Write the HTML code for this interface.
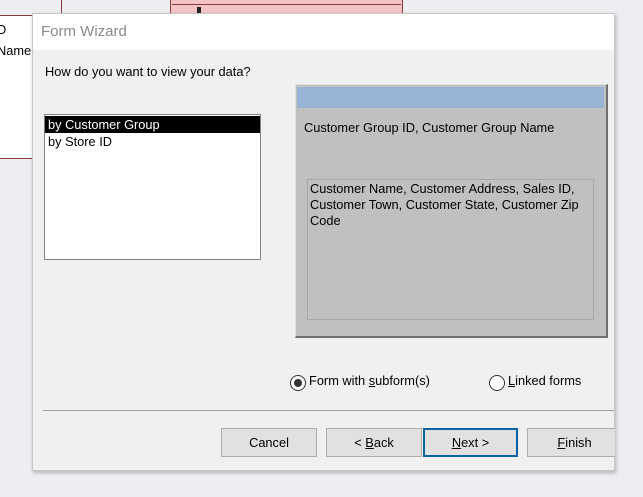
<!DOCTYPE html>
<html><head><style>
*{margin:0;padding:0;box-sizing:border-box}
body{width:643px;height:497px;background:#eceef1;position:relative;overflow:hidden;font-family:"Liberation Sans",sans-serif;font-size:12.8px;color:#000}
.a{position:absolute}
.btn{position:absolute;top:428px;height:29px;background:#e1e1e1;border:1px solid #adadad;text-align:center;line-height:27px;font-size:12.8px}
u{text-decoration:underline}
</style></head><body>
<div class="a" style="left:0;top:15px;width:40px;height:144px;border-top:1px solid #8b3a3a;border-bottom:1px solid #8b3a3a;background:#fff"></div>
<div class="a" style="left:61px;top:0;width:1px;height:14px;background:#8b3a3a"></div>
<div class="a" style="left:-3px;top:22px">D</div>
<div class="a" style="left:-3px;top:43px">Name</div>
<div class="a" style="left:170px;top:0;width:233px;height:14px;border-left:1px solid #8b3a3a;border-right:1px solid #8b3a3a;background:#f4c4c4"></div>
<div class="a" style="left:172px;top:4px;width:229px;height:1px;background:#8b3a3a"></div>
<div class="a" style="left:197px;top:7px;width:4px;height:6px;background:#222"></div>
<div class="a" style="left:32px;top:13px;width:583px;height:458px;background:#f0f0f0;border:1px solid #c8c8c8;box-shadow:1px 2px 4px rgba(0,0,0,.25)"></div>
<div class="a" style="left:33px;top:14px;width:581px;height:36px;background:#fff"></div>
<div class="a" style="left:41px;top:23px;font-size:15px;color:#8a8a8a">Form Wizard</div>
<div class="a" style="left:45px;top:64px">How do you want to view your data?</div>
<div class="a" style="left:44px;top:114px;width:217px;height:146px;background:#fff;border:1px solid #828282"></div>
<div class="a" style="left:45px;top:116px;width:215px;height:17px;background:#000;color:#fff;padding-left:3px;line-height:17px">by Customer Group</div>
<div class="a" style="left:48px;top:134px">by Store ID</div>
<div class="a" style="left:295px;top:84px;width:313px;height:254px;background:#c0c0c0;border-top:1px solid #e0e0e0;border-left:1px solid #e0e0e0;border-right:2px solid #6e6e6e;border-bottom:2px solid #6e6e6e"></div>
<div class="a" style="left:297px;top:87px;width:307px;height:21px;background:#98b4d4"></div>
<div class="a" style="left:304px;top:120px">Customer Group ID, Customer Group Name</div>
<div class="a" style="left:307px;top:179px;width:287px;height:141px;border:1px solid #a6a6a6"></div>
<div class="a" style="left:310px;top:181px;width:282px;line-height:16px">Customer Name, Customer Address, Sales ID, Customer Town, Customer State, Customer Zip Code</div>
<div class="a" style="left:290px;top:375px;width:16px;height:16px;border-radius:50%;border:1px solid #333;background:#fff"></div>
<div class="a" style="left:294px;top:379px;width:8px;height:8px;border-radius:50%;background:#333"></div>
<div class="a" style="left:309px;top:373px">Form with <u>s</u>ubform(s)</div>
<div class="a" style="left:489px;top:375px;width:16px;height:16px;border-radius:50%;border:1px solid #333;background:#fff"></div>
<div class="a" style="left:508px;top:373px"><u>L</u>inked forms</div>
<div class="a" style="left:43px;top:410px;width:571px;height:1px;background:#a0a0a0"></div>
<div class="btn" style="left:221px;width:96px">Cancel</div>
<div class="btn" style="left:326px;width:96px">&lt; <u>B</u>ack</div>
<div class="btn" style="left:423px;width:95px;border:2px solid #0a64a4;line-height:25px"><u>N</u>ext &gt;</div>
<div class="btn" style="left:527px;width:88px;border-right:none;padding-left:6px"><u>F</u>inish</div>
</body></html>
